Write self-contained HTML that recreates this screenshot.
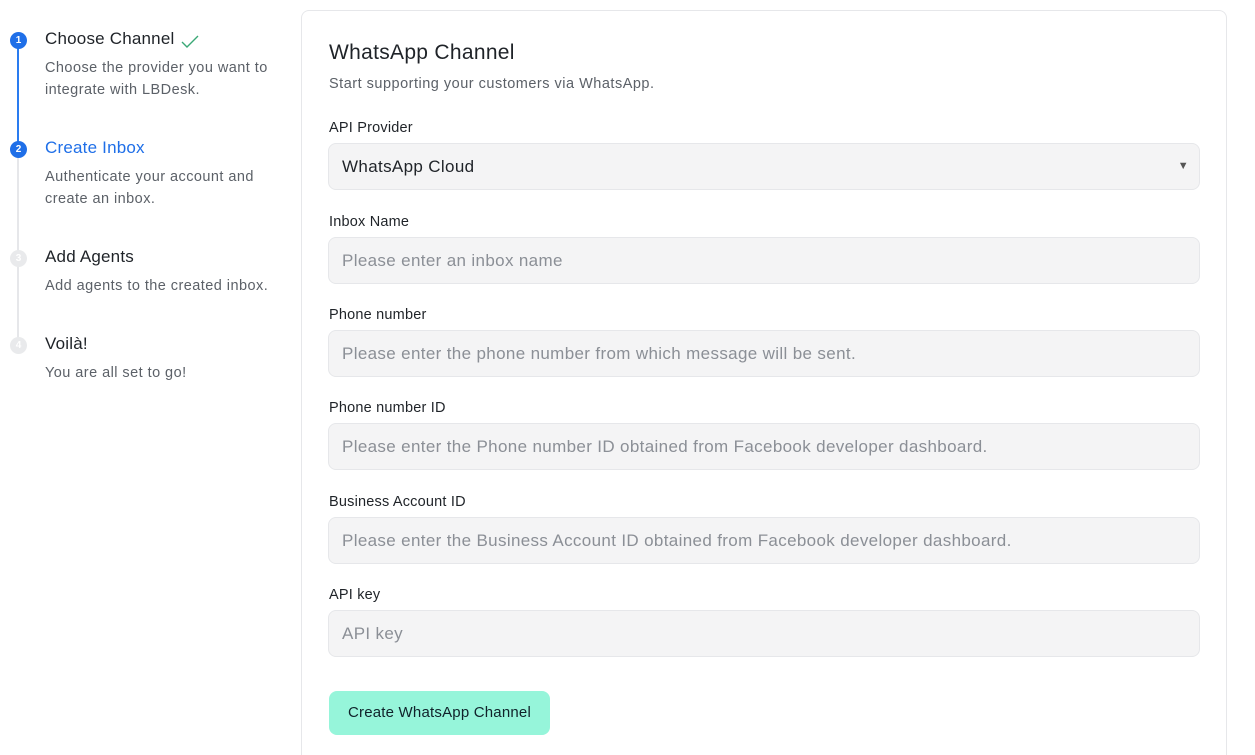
<!DOCTYPE html>
<html style="width:1255px;height:755px;overflow:hidden"><head><meta charset="utf-8"><style>
*{box-sizing:border-box;margin:0;padding:0}
body{width:1255px;height:755px;overflow:hidden;background:#fff;font-family:"Liberation Sans",sans-serif;position:relative;color:#1f2328}
.abs{position:absolute}
.circ{position:absolute;left:10px;width:17px;height:17px;border-radius:50%;color:#fff;font-size:10px;font-weight:bold;text-align:center;line-height:17px}
.t{position:absolute;left:45px;font-size:17px;color:#1f2328;letter-spacing:0.2px}
.d{position:absolute;left:45px;font-size:14.5px;color:#5c6168;line-height:22px;letter-spacing:0.45px}
.card{position:absolute;left:301px;top:10px;width:926px;height:745px;border:1px solid #e6e7ea;border-bottom:none;border-radius:8px 8px 0 0;background:#fff}
.lbl{position:absolute;left:329px;font-size:14.5px;color:#1f2328;letter-spacing:0.2px}
.in{position:absolute;left:328px;width:872px;height:47px;background:#f4f4f5;border:1px solid #e6e7ea;border-radius:8px;padding-left:13px;line-height:45px;font-size:17px;color:#8b8f96;letter-spacing:0.35px}
</style></head><body>
<div class="abs" style="left:17px;top:40px;width:2px;height:110px;background:#2a7cf0"></div>
<div class="abs" style="left:17px;top:150px;width:2px;height:196px;background:#e6e7ea"></div>
<div class="circ" style="top:32px;background:#1f6fe8">1</div>
<div class="circ" style="top:141px;background:#1f6fe8">2</div>
<div class="circ" style="top:250px;background:#e9eaec">3</div>
<div class="circ" style="top:337px;background:#e9eaec">4</div>
<div class="t" style="top:29px">Choose Channel <svg width="20" height="16" viewBox="0 0 20 16" style="vertical-align:-5px;margin-left:1px"><path d="M2 9l5 5L18 3" fill="none" stroke="#3aa876" stroke-width="1.4"/></svg></div>
<div class="d" style="top:57px">Choose the provider you want to<br>integrate with LBDesk.</div>
<div class="t" style="top:138px;color:#1f6fe8">Create Inbox</div>
<div class="d" style="top:166px">Authenticate your account and<br>create an inbox.</div>
<div class="t" style="top:247px">Add Agents</div>
<div class="d" style="top:275px">Add agents to the created inbox.</div>
<div class="t" style="top:334px">Voilà!</div>
<div class="d" style="top:362px">You are all set to go!</div>
<div class="card"></div>
<div class="abs" style="left:329px;top:41px;font-size:21px;color:#1f2328;letter-spacing:0.3px">WhatsApp Channel</div>
<div class="abs" style="left:329px;top:76px;font-size:14.5px;color:#5c6168;letter-spacing:0.5px">Start supporting your customers via WhatsApp.</div>
<div class="lbl" style="top:120px">API Provider</div>
<div class="in" style="top:143px;color:#1f2328">WhatsApp Cloud<span style="position:absolute;right:10px;top:0;font-size:11px;color:#555">▼</span></div>
<div class="lbl" style="top:214px">Inbox Name</div>
<div class="in" style="top:237px">Please enter an inbox name</div>
<div class="lbl" style="top:307px">Phone number</div>
<div class="in" style="top:330px">Please enter the phone number from which message will be sent.</div>
<div class="lbl" style="top:400px">Phone number ID</div>
<div class="in" style="top:423px">Please enter the Phone number ID obtained from Facebook developer dashboard.</div>
<div class="lbl" style="top:494px">Business Account ID</div>
<div class="in" style="top:517px">Please enter the Business Account ID obtained from Facebook developer dashboard.</div>
<div class="lbl" style="top:587px">API key</div>
<div class="in" style="top:610px">API key</div>
<div class="abs" style="left:329px;top:691px;width:221px;height:44px;background:#96f5da;border-radius:8px;text-align:center;line-height:44px;font-size:15px;color:#10222a;letter-spacing:0.2px">Create WhatsApp Channel</div>
</body></html>
